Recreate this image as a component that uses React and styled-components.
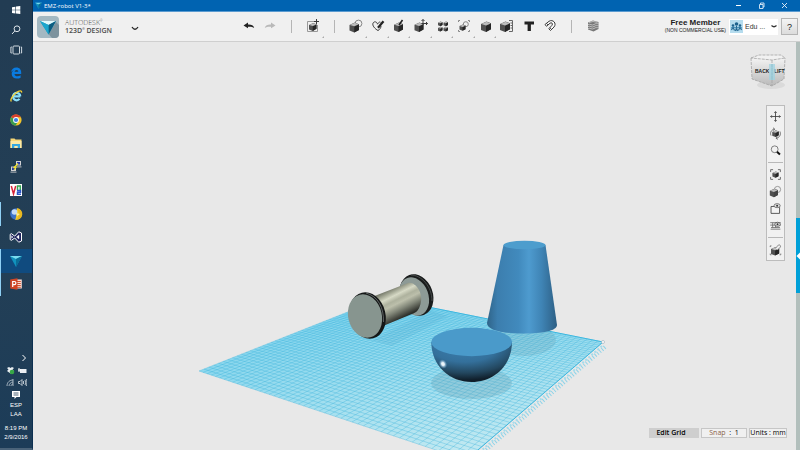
import React from 'react'
import styled, { createGlobalStyle, css } from 'styled-components'

const GlobalStyle = createGlobalStyle`
  * { box-sizing: border-box; }
  html, body, #root { height: 100%; }
  body {
    margin: 0;
    overflow: hidden;
    font-family: "Open Sans", "Noto Sans", sans-serif;
  }
  button, select {
    margin: 0;
    padding: 0;
    border: 0;
    background: none;
    font: inherit;
    color: inherit;
  }
  svg { display: block; }
`

/* ---------- taskbar icons ---------- */

const WindowsIcon = () => (
  <svg width="16" height="16" viewBox="0 0 16 16" fill="#fff">
    <path d="M4 5.2 7.4 4.7V7.7H4zM8 4.6 12.3 4V7.7H8zM4 8.3H7.4V11.4L4 10.9zM8 8.3H12.3V12L8 11.4z" />
  </svg>
)

const SearchIcon = () => (
  <svg width="16" height="16" viewBox="0 0 16 16" fill="none" stroke="#dfe6ec">
    <circle cx="9" cy="6.8" r="2.9" />
    <path d="M6.8 9 4 12" />
  </svg>
)

const TaskViewIcon = () => (
  <svg width="16" height="16" viewBox="0 0 16 16" fill="none" stroke="#cfd8df">
    <rect x="5" y="4" width="6.5" height="8" rx="1" />
    <path d="M3.8 5H2.9V11H3.8M12.7 5h.9V11H12.7" />
  </svg>
)

const EdgeIcon = () => (
  <svg width="16" height="16" viewBox="0 0 16 16" fill="#0a7be0">
    <path d="M3 7.4C3.5 4.4 5.6 2.5 8.4 2.5c3.2 0 4.8 2.3 4.8 4.9v1.5H6.5c.1 1.6 1.4 2.3 3 2.3 1.2 0 2.2-.3 3.1-.9v2.4c-1 .6-2.3.9-3.7.9-3.3 0-5.2-1.9-5.2-4.6 0-1.8 1-3.2 2.6-4C4.7 5.5 3.7 6.2 3 7.4zm3.6-.6h3.7c0-1.2-.6-1.9-1.7-1.9S6.8 5.6 6.6 6.8z" />
  </svg>
)

const ExplorerIcon = () => (
  <svg width="16" height="16" viewBox="0 0 16 16" fill="none">
    <path d="M12.3 8.4H5.5M12.3 8.4A3.7 3.7 0 1 0 11.5 10.9" stroke="#8be0fb" strokeWidth="2.2" />
    <path d="M3.4 13.4C1.6 12 5 7 8.5 4.5 11 2.7 13.9 2 13.6 4.6" stroke="#f5cf32" strokeWidth="1.3" />
  </svg>
)

const ChromeIcon = () => (
  <svg width="16" height="16" viewBox="0 0 16 16">
    <circle cx="8" cy="8" r="5.6" fill="#f3c52a" />
    <path d="M8 8 3.1 5.2A5.6 5.6 0 0 1 12.9 5.2L8 5.3z" fill="#d9412f" />
    <path d="M8 8 3.1 5.2A5.6 5.6 0 0 0 7.6 13.6L10.3 9z" fill="#3a9c50" />
    <circle cx="8" cy="8" r="2.9" fill="#fff" />
    <circle cx="8" cy="8" r="2.1" fill="#3f7fe4" />
  </svg>
)

const FolderIcon = () => (
  <svg width="16" height="16" viewBox="0 0 16 16">
    <path d="M2.5 3.5h4l1 1h6v8.5h-11z" fill="#f8d775" />
    <path d="M2.5 6h11v7h-11z" fill="#fbe9a5" />
    <path d="M4 13V9h8v4h-2.3v-2H6.3v2z" fill="#35a8e0" />
  </svg>
)

const PuttyIcon = () => (
  <svg width="16" height="16" viewBox="0 0 16 16">
    <path d="M8 2h5v4.5H8zM3 7.5h5V12H3z" fill="#d0d0d4" />
    <path d="M9 3h3v2.5H9zM4 8.5h3V11H4z" fill="#2136a8" />
    <path d="M8.5 7.2h5V8.5h-5zM2.5 12.5h6v1.2h-6z" fill="#9da5ac" />
    <path d="M10 4.5 6 8.5 8 8.3 6 11" fill="none" stroke="#f4e229" strokeWidth="1.1" />
  </svg>
)

const VncIcon = () => (
  <svg width="16" height="16" viewBox="0 0 16 16" fill="none" strokeWidth="1.5">
    <path d="M2 2h12v12H2z" fill="#fff" />
    <path d="M3.3 4 5.5 12 7.7 4" stroke="#d7263a" />
    <path d="M9.5 8V4h2.8V8" stroke="#35a853" />
    <path d="M9 8.5h3.5v1.8H9.5v2h3.5" stroke="#2b55c8" />
  </svg>
)

const GlobeIcon = () => (
  <svg width="16" height="16" viewBox="0 0 16 16">
    <circle cx="8" cy="8" r="5.8" fill="#3d73c9" />
    <path d="M9 2.2A5.8 5.8 0 0 1 7 13.7C9 11 8 6 9 2.2z" fill="#f5cd2b" />
    <path d="M9 2.2A5.8 5.8 0 0 1 8 13.8C12 10 11 6 9 2.2z" fill="#e8b820" />
    <circle cx="6.5" cy="6" r="2.8" fill="#c4daf5" />
    <path d="M8 7l4 1-3 2z" fill="#fff1a0" />
  </svg>
)

const StudioIcon = () => (
  <svg width="16" height="16" viewBox="0 0 16 16" fill="#20265e" stroke="#fff" strokeWidth="1" strokeLinejoin="round">
    <path d="M2.2 5.3 3.5 4.7 6.7 7.1 10.7 2.8 13.5 4V12L10.7 13.2 6.7 9 3.5 11.3 2.2 10.7z" />
    <path d="M11 6 8.5 8 11 10zM3.6 6.7V9.3L5 8z" fill="#fff" strokeWidth=".3" />
  </svg>
)

const DesignIcon = ({ size = 16 }) => (
  <svg width={size} height={size} viewBox="0 0 16 16">
    <path d="M2 3H14L8 14z" fill="#1193be" />
    <path d="M2 3H14L8 6z" fill="#79dcf0" />
    <path d="M14 3 8 14V6z" fill="#0b6d97" />
  </svg>
)

const PowerPointIcon = () => (
  <svg width="16" height="16" viewBox="0 0 16 16">
    <path d="M8 3.5h5.8v9H8z" fill="#f8ded6" />
    <path d="M9 5.5h3.8M9 7.5h3.8M9 9.5h3.8M9 11.3h3.8" stroke="#d35230" />
    <path d="M2.2 3.4 9.5 2.2V13.8L2.2 12.6z" fill="#d04525" />
    <path d="M4.7 11V5.5h1.6a1.5 1.5 0 0 1 0 3.2H4.7" fill="none" stroke="#fff" strokeWidth="1.2" />
  </svg>
)

/* ---------- tool icons ---------- */

const Block = ({ x = 3, y = 4, s = 9, dark = '#262626' }) => (
  <g transform={`translate(${x} ${y}) scale(${s / 10})`} stroke="none">
    <path d="M0 2.5 5.5 0 10 1.800V7.800L5 10.500 0 8.500z" fill="#505050" />
    <path d="M5 4.300 10 1.800V7.800L5 10.500z" fill={dark} />
    <path d="M.4 2.500 5.500.3 9.700 1.900 5 4z" fill="#bdbdbd" />
  </g>
)

const Glyph = ({ children, size = 16 }) => (
  <svg width={size} height={size} viewBox="0 0 16 16" fill="none" stroke="#3a3a3a" strokeWidth="1">
    {children}
  </svg>
)

const glyphs = {
  undo: <path d="M2.5 7.5 7 4.5V6.6C10 6.4 12.5 7.3 13.2 10 11.5 8.7 9.5 8.5 7 8.7V10.3z" fill="#222" stroke="none" />,
  redo: <path d="M13.5 7.5 9 4.5V6.6C6 6.4 3.5 7.3 2.8 10 4.5 8.7 6.5 8.5 9 8.7V10.3z" fill="#b9b9b9" stroke="none" />,
  insert: (
    <>
      <path d="M9 3.5H2.5v10h10V7" stroke="#999" />
      <Block x={4} y={5} s={7.5} />
      <path d="M11.5 1v5M9 3.5h5" />
    </>
  ),
  primitives: (
    <>
      <circle cx="10.5" cy="5.5" r="3.4" stroke="#888" />
      <Block x={1.5} y={4.5} s={9.5} />
    </>
  ),
  sketch: (
    <>
      <path d="M8 12.5C5 11 2 7.5 3 5.2 4 3 7 3.5 7.5 6.2 9 3.5 10 4 10.5 4.3M8 12.5C10 11.5 11 9.5 11 8" />
      <path d="M8 9.8 13.5 3.2" stroke="#222" strokeWidth="2.2" />
    </>
  ),
  construct: (
    <>
      <Block x={3} y={4.5} s={9} />
      <path d="M8 7 11.5 2" stroke="#222" strokeWidth="1.6" />
    </>
  ),
  modify: (
    <>
      <Block x={1.5} y={4.5} s={9} />
      <path d="M10 1.5V7M8.5 5.5h6M13 4l1.5 1.5L13 7M8.5 3 10 1.500 11.500 3" />
    </>
  ),
  pattern: (
    <>
      <Block x={3} y={3.5} s={4.5} />
      <Block x={8.5} y={3.5} s={4.5} />
      <Block x={3} y={8.8} s={4.5} />
      <Block x={8.5} y={8.8} s={4.5} />
    </>
  ),
  grouping: (
    <>
      <path d="M2.5 4V2.5H4M12 2.5h1.5V4M2.5 12v1.5H4M12 13.5h1.5V12" stroke="#888" />
      <circle cx="9.8" cy="6.2" r="2.5" stroke="#888" />
      <Block x={3.5} y={6.5} s={6} />
    </>
  ),
  combine: <Block x={3} y={3.5} s={10} />,
  measure: (
    <>
      <Block x={1} y={3.5} s={10} />
      <path d="M10 2.5H13.5v11H10M11.500 5h2M11.500 7.500h2M11.500 10h2" stroke="#666" />
    </>
  ),
  text: <path d="M3.5 3.5h9.500V6.600H9.900V13H6.600V6.600H3.500z" fill="#222" stroke="none" />,
  snap: (
    <>
      <path d="M3 6.5 7 3.3C11 .8 15 5.5 12 9L8.5 12.5 6.8 10.8 10 7.3C11.3 5.5 9.5 4 8 5.2L4.5 8.3z" fill="#fff" />
      <path d="M4.5 5.3 6.2 7M7.8 9.7 9.6 11.4" />
    </>
  ),
  material: (
    <>
      <path d="M3 4.5 8 2.5 13.5 4V11L8.5 13.5 3 11.5z" fill="#777" stroke="none" />
      <path d="M3 6.5C5 5.5 7 8 9 6.5S12 6 13.5 5.5M3 8.5C5 7.5 7 10 9 8.5S12 8 13.5 7.5M3 10.5C5 9.5 7 12 9 10.5S12 10 13.5 9.5M4 4.5 8 3.5 12.5 4.3" stroke="#ddd" strokeWidth=".7" />
    </>
  ),
  pan: <path d="M8 2v12M2 8h12M6.5 3.5 8 2l1.5 1.5M6.5 12.5 8 14l1.5-1.5M3.5 6.5 2 8l1.5 1.5M12.5 6.5 14 8l-1.5 1.5" />,
  orbit: (
    <>
      <Block x={4} y={4} s={8} />
      <path d="M2.5 10.5C.8 7 3 3.500 6.500 2.500M13.500 5.500C15 9.500 13 13 9 13.800M5 1 7 2.500 5.500 4.500M10.500 12 8.500 13.800 10.800 15.200" stroke="#555" />
    </>
  ),
  zoom: (
    <>
      <circle cx="7" cy="6.5" r="4.2" stroke="#666" />
      <path d="M9.8 9.5 13.5 13" stroke="#111" strokeWidth="2.4" />
    </>
  ),
  fit: (
    <>
      <path d="M2 5V2h3M11 2h3v3M2 11v3h3M11 14h3v-3" stroke="#555" />
      <Block x={4.2} y={4.2} s={7.5} />
    </>
  ),
  shading: (
    <>
      <circle cx="10.5" cy="5.5" r="3.800" stroke="#888" />
      <Block x={1} y={4.5} s={10} dark="#444" />
    </>
  ),
  visible: (
    <>
      <path d="M2.500 5.500h10.500v8.500H2.500z" fill="#f3f3f3" />
      <ellipse cx="10" cy="4.500" rx="3.800" ry="2.500" fill="#ddd" stroke="#666" />
      <circle cx="10" cy="4.500" r="1.200" fill="#333" stroke="none" />
    </>
  ),
  gridview: (
    <>
      <path d="M1.500 4.500h13M1.500 7.500h13M2.500 10.500h11M4.500 4.500v6M8 4.500v6M2 12.500h12" stroke="#666" />
      <ellipse cx="10.500" cy="6.500" rx="3.500" ry="2.500" fill="#ddd" stroke="#555" />
      <circle cx="10.500" cy="6.500" r="1.200" fill="#333" stroke="none" />
    </>
  ),
  snapTo: (
    <>
      <Block x={2.500} y={5} s={10} />
      <path d="M1.500 5V3.500H3M1.500 13v1.500H3M13 14.500h1.500V13" stroke="#666" />
      <path d="M8 6.500 11.500 2.500C13 1.500 15 3.500 14 5L10.500 8.500" fill="#eee" stroke="#777" />
    </>
  ),
}

const taskbarTop = [
  ['Start', WindowsIcon],
  ['Search', SearchIcon],
  ['Task view', TaskViewIcon],
]

const taskbarApps = [
  ['Edge', EdgeIcon],
  ['Internet Explorer', ExplorerIcon],
  ['Chrome', ChromeIcon],
  ['File Explorer', FolderIcon],
  ['PuTTY', PuttyIcon],
  ['VNC', VncIcon],
  ['Globe', GlobeIcon, 'open'],
  ['Visual Studio', StudioIcon],
  ['123D Design', DesignIcon, 'active'],
  ['PowerPoint', PowerPointIcon, 'open'],
]

const tools = [
  ['undo'], ['redo'], null, ['insert', true], null,
  ['primitives', true], ['sketch', true], ['construct', true], ['modify', true],
  ['pattern', true], ['grouping', true], ['combine', true], ['measure'],
  ['text'], ['snap'], null, ['material'],
]

const navTools = ['pan', 'orbit', 'zoom', null, 'fit', 'shading', 'visible', 'gridview', null, 'snapTo']

/* ---------- scene ---------- */

// corners of the work plane: back, right, front, left
const plane = [[383, 298], [603, 342], [466, 460], [199, 371]]
const CELLS = 50

// maps a point of the unit square onto the plane, in perspective
const project = (u, v) => {
  const [[x0, y0], [x1, y1], [x2, y2], [x3, y3]] = plane
  const dx1 = x1 - x2, dx2 = x3 - x2, sx = x0 - x1 + x2 - x3
  const dy1 = y1 - y2, dy2 = y3 - y2, sy = y0 - y1 + y2 - y3
  const det = dx1 * dy2 - dx2 * dy1
  const g = (sx * dy2 - dx2 * sy) / det
  const h = (dx1 * sy - sx * dy1) / det
  const w = g * u + h * v + 1
  const x = ((x1 - x0 + g * x1) * u + (x3 - x0 + h * x3) * v + x0) / w
  const y = ((y1 - y0 + g * y1) * u + (y3 - y0 + h * y3) * v + y0) / w
  return `${x.toFixed(2)} ${y.toFixed(2)}`
}

const gridLines = () => {
  let d = ''
  for (let i = 0; i <= CELLS; i++) {
    const t = i / CELLS
    d += `M${project(t, 0)}L${project(t, 1)}M${project(0, t)}L${project(1, t)}`
  }
  return d
}

const Scene = () => (
  <SceneSvg viewBox="33 42 767 408" preserveAspectRatio="xMidYMid slice" aria-label="Model">
    <defs>
      <linearGradient id="plane" x1="0" y1="0" x2="0.5" y2="1">
        <stop offset="0" stopColor="#76d0ed" />
        <stop offset=".45" stopColor="#93daee" />
        <stop offset="1" stopColor="#bfe8f1" />
      </linearGradient>
      <linearGradient id="cone">
        <stop offset="0" stopColor="#2f6489" />
        <stop offset=".15" stopColor="#3c7eae" />
        <stop offset=".45" stopColor="#418abd" />
        <stop offset=".6" stopColor="#4e9bcf" />
        <stop offset=".78" stopColor="#3f84b5" />
        <stop offset="1" stopColor="#2d5f84" />
      </linearGradient>
      <radialGradient id="bowl" cx=".42" cy=".1" r=".85" fx=".4" fy=".05">
        <stop offset="0" stopColor="#3d81b2" />
        <stop offset=".5" stopColor="#34709b" />
        <stop offset=".8" stopColor="#23475f" />
        <stop offset="1" stopColor="#101f2b" />
      </radialGradient>
      <radialGradient id="shine">
        <stop offset="0" stopColor="#fff" />
        <stop offset=".35" stopColor="#dcebf5" />
        <stop offset="1" stopColor="#5c9bc6" stopOpacity="0" />
      </radialGradient>
      <linearGradient id="tube" gradientUnits="userSpaceOnUse" x1="390" y1="289" x2="404" y2="317">
        <stop offset="0" stopColor="#75796a" />
        <stop offset=".12" stopColor="#a4a895" />
        <stop offset=".25" stopColor="#d6d9c5" />
        <stop offset=".4" stopColor="#aeb29e" />
        <stop offset=".52" stopColor="#bcbfab" />
        <stop offset=".72" stopColor="#83887a" />
        <stop offset="1" stopColor="#2b2d28" />
      </linearGradient>
    </defs>

    <polygon points={plane.map((p) => p.join(',')).join(' ')} fill="url(#plane)" />
    <path d={gridLines()} stroke="#35b2dc" strokeWidth=".7" opacity=".48" fill="none" />
    <path d="M383 298 603 342 478 450" stroke="#3cb8e0" fill="none" />
    <path d="M605 347 486 450" stroke="#8dd3e8" strokeWidth="4" strokeDasharray="1 2" fill="none" />
    <path d="M602 346 482 450" stroke="#a5dbea" strokeWidth="2" strokeDasharray="2 2" fill="none" />
    <circle cx="603" cy="342" r="1.5" fill="#fff" stroke="#9aa9b5" strokeWidth=".6" />

    <ellipse cx="471.5" cy="383" rx="40.5" ry="16" fill="#5f9caf" opacity=".3" />
    <ellipse cx="524" cy="340" rx="32" ry="16" fill="#5f9caf" opacity=".24" />
    <path d="M372 340 392 346 448 316 430 311z" fill="#4aa3c4" opacity=".16" />

    <path d="M503.5 245 487 323C487 330 502 333.5 522 333.5S557 331 557 325L545.5 245z" fill="url(#cone)" />
    <ellipse cx="524.5" cy="245" rx="21" ry="4.3" fill="#4d9dcd" />

    <path d="M431.3 342C431.3 366 450 382 471.5 382S512 366 512 342z" fill="url(#bowl)" />
    <ellipse cx="471.7" cy="342" rx="40.4" ry="14.2" fill="#4a9aca" />
    <ellipse cx="443" cy="364" rx="4" ry="5" fill="url(#shine)" transform="rotate(-30 443 364)" />

    <ellipse cx="416.5" cy="295" rx="16.3" ry="21.3" fill="#1a1c1c" transform="rotate(-20 416.5 295)" />
    <path d="M411 275C421 275 432 286 432 301" stroke="#535858" strokeWidth=".8" fill="none" />
    <ellipse cx="414" cy="296.5" rx="14.4" ry="19.7" fill="#8d9a96" transform="rotate(-20 414 296.5)" />
    <path d="M372 297 408 283C415 281 424 293 420.500 304 419 310 416 313 412 314L383 326z" fill="url(#tube)" />
    <ellipse cx="367.5" cy="315.5" rx="18" ry="23.5" fill="#151717" transform="rotate(-14 367.5 315.5)" />
    <path d="M366 293C378 296 384 308 383.5 322" stroke="#707676" strokeWidth=".8" fill="none" />
    <ellipse cx="365" cy="316" rx="16.8" ry="22" fill="#87958f" transform="rotate(-14 365 316)" />
  </SceneSvg>
)

const ViewCube = () => (
  <svg width="38" height="38" viewBox="0 0 38 38" role="img" aria-label="View cube">
    <defs>
      <linearGradient id="face" x1="0" y1="0" x2="0" y2="1">
        <stop offset="0" stopColor="#f3f3f3" />
        <stop offset="1" stopColor="#b9b9b9" />
      </linearGradient>
    </defs>
    <ellipse cx="22" cy="33" rx="14" ry="4" fill="#dadada" />
    <path d="M2 6 23 8V34L3 27z" fill="url(#face)" />
    <path d="M23 8 36 6 35 27 23 34z" fill="url(#face)" />
    <path d="M2 6 10 3H32L36 6 23 8z" fill="#f1f1f1" />
    <path d="M2 6 10 3H32L36 6 23 8zM23 8V34M2 6 3 27 23 34 35 27 36 6" fill="none" stroke="#a5a5a5" strokeDasharray="3 1" strokeWidth=".8" />
    <CubeText x="6" y="21">BACK</CubeText>
    <CubeText x="25" y="21">LIFT</CubeText>
    <path d="M20 12h6V28h-6z" fill="#9fd3e2" opacity=".75" />
    <path d="M23 12V28" stroke="#7fbdcf" strokeWidth=".6" />
  </svg>
)

/* ---------- page ---------- */

const App = () => {
  return (
    <>
      <GlobalStyle />
      <Desktop>
        <Taskbar>
          {taskbarTop.map(([name, Icon]) => (
            <TaskButton key={name} aria-label={name} $height={20}><Icon /></TaskButton>
          ))}
          <AppList>
            {taskbarApps.map(([name, Icon, state]) => (
              <TaskButton key={name} aria-label={name} $state={state}><Icon /></TaskButton>
            ))}
          </AppList>
          <Tray>
            <TrayChevron aria-label="Show hidden icons">
              <svg width="6" height="8" viewBox="0 0 6 8"><path d="M1.5 1 4.5 4 1.5 7" fill="none" stroke="#fff" /></svg>
            </TrayChevron>
            <TrayRow>
              <svg width="9" height="9" viewBox="0 0 9 9">
                <path d="M1 2 3 1 4.5 2 6 1 8 2 6.5 3.5 8 5 4.5 7.5 1 5 2.5 3.5z" fill="#e9eef2" />
                <circle cx="6" cy="6" r="2.3" fill="#37a846" />
              </svg>
              <svg width="9" height="9" viewBox="0 0 9 9">
                <path d="M2 3h6.5v4H2z" fill="#e9eef2" />
                <path d="M0 4h3M1 2v4" stroke="#fff" />
              </svg>
            </TrayRow>
            <TrayRow>
              <svg width="9" height="9" viewBox="0 0 9 9" fill="none" stroke="#c5d0d8" strokeWidth=".8">
                <path d="M1 8C1 4 4 2 7 2M3 8C3 6 5 4 7 4M5 8C5 7 6 6 7 6M7 1v7" />
              </svg>
              <svg width="9" height="9" viewBox="0 0 9 9" fill="none" stroke="#e0e6ea" strokeWidth=".8">
                <path d="M.5 3.5H2L4 1.5v6L2 5.5H.5zM5.500 3v3M7 2c.8 1.500.8 3.500 0 5M8.200 1c1 2 1 5 0 7" />
              </svg>
            </TrayRow>
            <svg width="10" height="10" viewBox="0 0 10 10">
              <path d="M1 1h8v6H5.5L3.5 9V7H1z" fill="#fff" />
              <path d="M2.5 3h5M2.5 5h5" stroke="#1e3b54" strokeWidth=".8" />
            </svg>
            <TrayText>ESP<br />LAA</TrayText>
            <TrayClock>8:19 PM<br />2/9/2016</TrayClock>
          </Tray>
        </Taskbar>

        <Window>
          <TitleBar>
            <DesignIcon size={9} />
            <Title>EMZ-robot V1-3*</Title>
            <WindowButton aria-label="Minimize">
              <svg width="7" height="7" viewBox="0 0 7 7"><path d="M1 3.5h5" stroke="#fff" /></svg>
            </WindowButton>
            <WindowButton aria-label="Restore">
              <svg width="7" height="7" viewBox="0 0 7 7" fill="none" stroke="#dcebf7" strokeWidth=".9"><path d="M1.5 2.5h3.5v4H1.5zM2.500 2.500V1H6v4H5" /></svg>
            </WindowButton>
            <WindowButton aria-label="Close">
              <svg width="7" height="7" viewBox="0 0 7 7"><path d="M1 1 6 6M6 1 1 6" stroke="#e8f1f9" strokeWidth=".9" /></svg>
            </WindowButton>
          </TitleBar>

          <Toolbar>
            <Brand>
              <svg width="22" height="22" viewBox="0 0 22 22">
                <rect width="22" height="22" rx="4" fill="#a3b8c2" />
                <path d="M19 6 22 9V18A4 4 0 0 1 18 22H15L11.5 18z" fill="#7d939e" />
                <path d="M3 5H19L11.5 18.5z" fill="#1191ba" />
                <path d="M3 5H19L11.5 9z" fill="#e2f8fb" />
                <path d="M19 5 11.5 18.5V9z" fill="#0c5c80" />
                <path d="M3 5 11.5 9V18.5z" fill="#1ba6cd" />
              </svg>
              <BrandText>
                <span>AUTODESK<sup>®</sup></span>
                <strong>123D<sup>®</sup> DESIGN</strong>
              </BrandText>
              <MenuButton aria-label="Menu">
                <svg width="8" height="5" viewBox="0 0 8 5"><path d="M1 1Q4 5.5 7 1" fill="none" stroke="#222" strokeWidth="1.3" /></svg>
              </MenuButton>
            </Brand>
            <Tools>
              {tools.map((tool, i) => tool
                ? <ToolButton key={i} aria-label={tool[0]} $more={tool[1]}><Glyph>{glyphs[tool[0]]}</Glyph></ToolButton>
                : <Divider key={i} />)}
            </Tools>
            <Account>
              <Member>
                <b>Free Member</b>
                <small>(NON COMMERCIAL USE)</small>
              </Member>
              <UserBox>
                <svg width="13" height="13" viewBox="0 0 13 13">
                  <path d="M0 0h13v13H0z" fill="#b5dcee" />
                  <circle cx="6.5" cy="4" r="1.8" fill="#1d628d" />
                  <circle cx="3" cy="5.5" r="1.3" fill="#1d628d" />
                  <circle cx="10" cy="5.5" r="1.3" fill="#1d628d" />
                  <path d="M6.5 6v2M3 7 1.500 10M3 7 4.500 10.500M10 7 8.500 10.500M10 7 11.500 10M6.500 8 5.500 11M6.500 8 7.500 11" stroke="#1d628d" strokeWidth="1.1" />
                  <path d="M1 8 3.500 7 6.500 8 9.500 7 12 8" stroke="#3a85b0" fill="none" />
                </svg>
                <UserSelect aria-label="Account" defaultValue="edu">
                  <option value="edu">Edu ...</option>
                </UserSelect>
                <svg width="6" height="5" viewBox="0 0 6 5"><path d="M.5 1.5Q3 4 5.5 1.5" fill="none" stroke="#333" strokeWidth="1.2" /></svg>
              </UserBox>
              <HelpButton>?</HelpButton>
            </Account>
          </Toolbar>

          <Viewport>
            <Scene />
            <Controls>
              <ViewCube />
              <NavPanel>
                {navTools.map((name, i) => name
                  ? <NavButton key={i} aria-label={name}><Glyph size={13}>{glyphs[name]}</Glyph></NavButton>
                  : <NavDivider key={i} />)}
              </NavPanel>
              <StatusBar>
                <StatusButton $filled $width={50}>Edit Grid</StatusButton>
                <StatusButton $width={46}><em>Snap</em>&nbsp; : &nbsp;1</StatusButton>
                <StatusButton $width={38}>Units : mm</StatusButton>
              </StatusBar>
            </Controls>
            <SideStrip>
              <SideHandle aria-label="Open panel">
                <svg width="4" height="8" viewBox="0 0 4 8"><path d="M4 .5V7.5L.5 4z" fill="#fff" /></svg>
              </SideHandle>
            </SideStrip>
          </Viewport>
        </Window>
      </Desktop>
    </>
  )
}

const Desktop = styled.div`
  display: flex;
  height: 100vh;
  background: #e8e8e8;
`

const Taskbar = styled.nav`
  display: flex;
  flex-direction: column;
  flex: 0 0 33px;
  background: linear-gradient(#223c53, #233f56 60%, #1c3c58);
  border-right: 1px solid #0c2f50;
  border-bottom: 2px solid #4a6379;
`

const TaskButton = styled.button`
  display: flex;
  align-items: center;
  justify-content: center;
  ${(p) => p.$height && css`height: ${p.$height}px;`}
  ${(p) => p.$state && css`box-shadow: inset 1px 0 #8fd0f5;`}
  ${(p) => p.$state === 'active' && css`background: #104b7f;`}
`

const AppList = styled.div`
  display: grid;
  grid-auto-rows: 1fr;
  height: 235px;
  margin-top: 1px;
`

const Tray = styled.div`
  display: flex;
  flex-direction: column;
  align-items: center;
  margin-top: auto;
  padding-bottom: 6px;
  color: #fff;
  font: 6px/9px "Liberation Sans", sans-serif;
  text-align: center;
`

const TrayChevron = styled.button`
  align-self: flex-end;
  margin: 0 5px 4px;
`

const TrayRow = styled.div`
  display: flex;
  gap: 3px;
  margin-bottom: 3px;
`

const TrayText = styled.div`
  margin-top: 1px;
`

const TrayClock = styled.time`
  margin-top: 5px;
`

const Window = styled.main`
  display: flex;
  flex-direction: column;
  flex: 1;
  min-width: 0;
`

const TitleBar = styled.header`
  display: flex;
  align-items: center;
  height: 12px;
  padding: 0 4px 0 1px;
  background: #0063b1;
  border-bottom: 1px solid #5b9bd0;
  color: #fff;
`

const Title = styled.h1`
  flex: 1;
  margin: 0 0 0 1px;
  font-size: 6px;
  font-weight: 400;
  line-height: 10px;
`

const WindowButton = styled.button`
  display: flex;
  justify-content: center;
  width: 23px;
`

const Toolbar = styled.div`
  display: flex;
  align-items: center;
  height: 30px;
  background: #f0f0f0;
  border-bottom: 1px solid #cfcfcf;
`

const Brand = styled.div`
  display: flex;
  align-items: center;
  flex: 0 0 205px;
  padding-left: 4px;
`

const BrandText = styled.div`
  display: flex;
  flex-direction: column;
  width: 67px;
  padding-left: 6px;
  color: #4c4c4c;
  font-size: 7px;
  line-height: 8px;
  white-space: nowrap;

  span { font-weight: 300; }
  strong { font-weight: 600; }
  sup {
    font-size: 3px;
    line-height: 1px;
  }
`

const MenuButton = styled.button`
  margin: 4px 0 0 5px;
`

const Tools = styled.div`
  display: grid;
  grid-template-columns: repeat(17, 1fr);
  flex: 0 1 366px;
  height: 100%;
`

const ToolButton = styled.button`
  display: flex;
  position: relative;
  align-items: center;
  justify-content: center;
  padding-bottom: 2px;

  ${(p) => p.$more && css`
    &::after {
      content: "";
      position: absolute;
      right: 0;
      bottom: 3px;
      border: 1px solid;
      border-color: transparent #aaa #aaa transparent;
    }
  `}
`

const Divider = styled.span`
  place-self: center;
  width: 1px;
  height: 13px;
  background: #b5b5b5;
`

const Account = styled.div`
  display: flex;
  align-items: center;
  gap: 3px;
  margin-left: auto;
  padding-right: 2px;
  font-family: "Liberation Sans", sans-serif;
`

const Member = styled.div`
  display: flex;
  flex-direction: column;
  align-items: center;
  color: #222;
  font-size: 8px;
  line-height: 8px;
  white-space: nowrap;

  small {
    font-size: 5px;
    line-height: 7px;
  }
`

const UserBox = styled.div`
  display: flex;
  align-items: center;
  width: 49px;
  height: 16px;
  padding: 0 1px;
  background: #fff;
`

const UserSelect = styled.select`
  flex: 1;
  min-width: 0;
  padding-left: 2px;
  appearance: none;
  color: #333;
  font-size: 7px;
`

const HelpButton = styled.button`
  width: 17px;
  height: 17px;
  background: linear-gradient(#f4f4f4, #dcdcdc);
  border: 1px solid #b5b5b5;
  color: #222;
  font-size: 9px;
`

const Viewport = styled.section`
  display: flex;
  position: relative;
  flex: 1;
  min-height: 0;
  background: #e8e8e8;
`

const SceneSvg = styled.svg`
  position: absolute;
  inset: 0;
  width: 100%;
  height: 100%;
`

const Controls = styled.div`
  display: flex;
  position: relative;
  flex: 1;
  flex-direction: column;
  align-items: flex-end;
  padding: 10px 9px 12px;
`

const NavPanel = styled.div`
  display: flex;
  flex-direction: column;
  align-items: center;
  width: 19px;
  margin: 15px 2px 0 0;
  padding: 2px 0;
  background: #f1f1f1;
  border: 1px solid #bcbcbc;
`

const NavButton = styled.button`
  display: flex;
  align-items: center;
  justify-content: center;
  height: 17px;
`

const NavDivider = styled.span`
  width: 15px;
  height: 1px;
  margin: 3px 0;
  background: #b8b8b8;
`

const StatusBar = styled.footer`
  display: flex;
  gap: 2px;
  margin-top: auto;
  color: #000;
  font-size: 7px;
`

const StatusButton = styled.button`
  width: ${(p) => p.$width}px;
  height: 10px;
  padding-right: ${(p) => (p.$filled ? 6 : 0)}px;
  background: ${(p) => (p.$filled ? '#cecece' : '#f0f0f0')};
  border: 1px solid ${(p) => (p.$filled ? '#cecece' : '#c6c6c6')};
  font-family: "Open Sans", sans-serif;
  font-weight: ${(p) => (p.$filled ? 600 : 500)};
  line-height: 8px;
  white-space: nowrap;

  em {
    color: #8a6249;
    font-style: normal;
  }
`

const SideStrip = styled.aside`
  display: flex;
  position: relative;
  flex-direction: column;
  width: 4px;
  background: #b2bfbc;
`

const SideHandle = styled.button`
  display: flex;
  align-items: center;
  height: 75px;
  margin-top: 176px;
  background: #00a0d8;
`

const CubeText = styled.text`
  fill: #222;
  font: 600 5px "Liberation Sans", sans-serif;
`

export default App
